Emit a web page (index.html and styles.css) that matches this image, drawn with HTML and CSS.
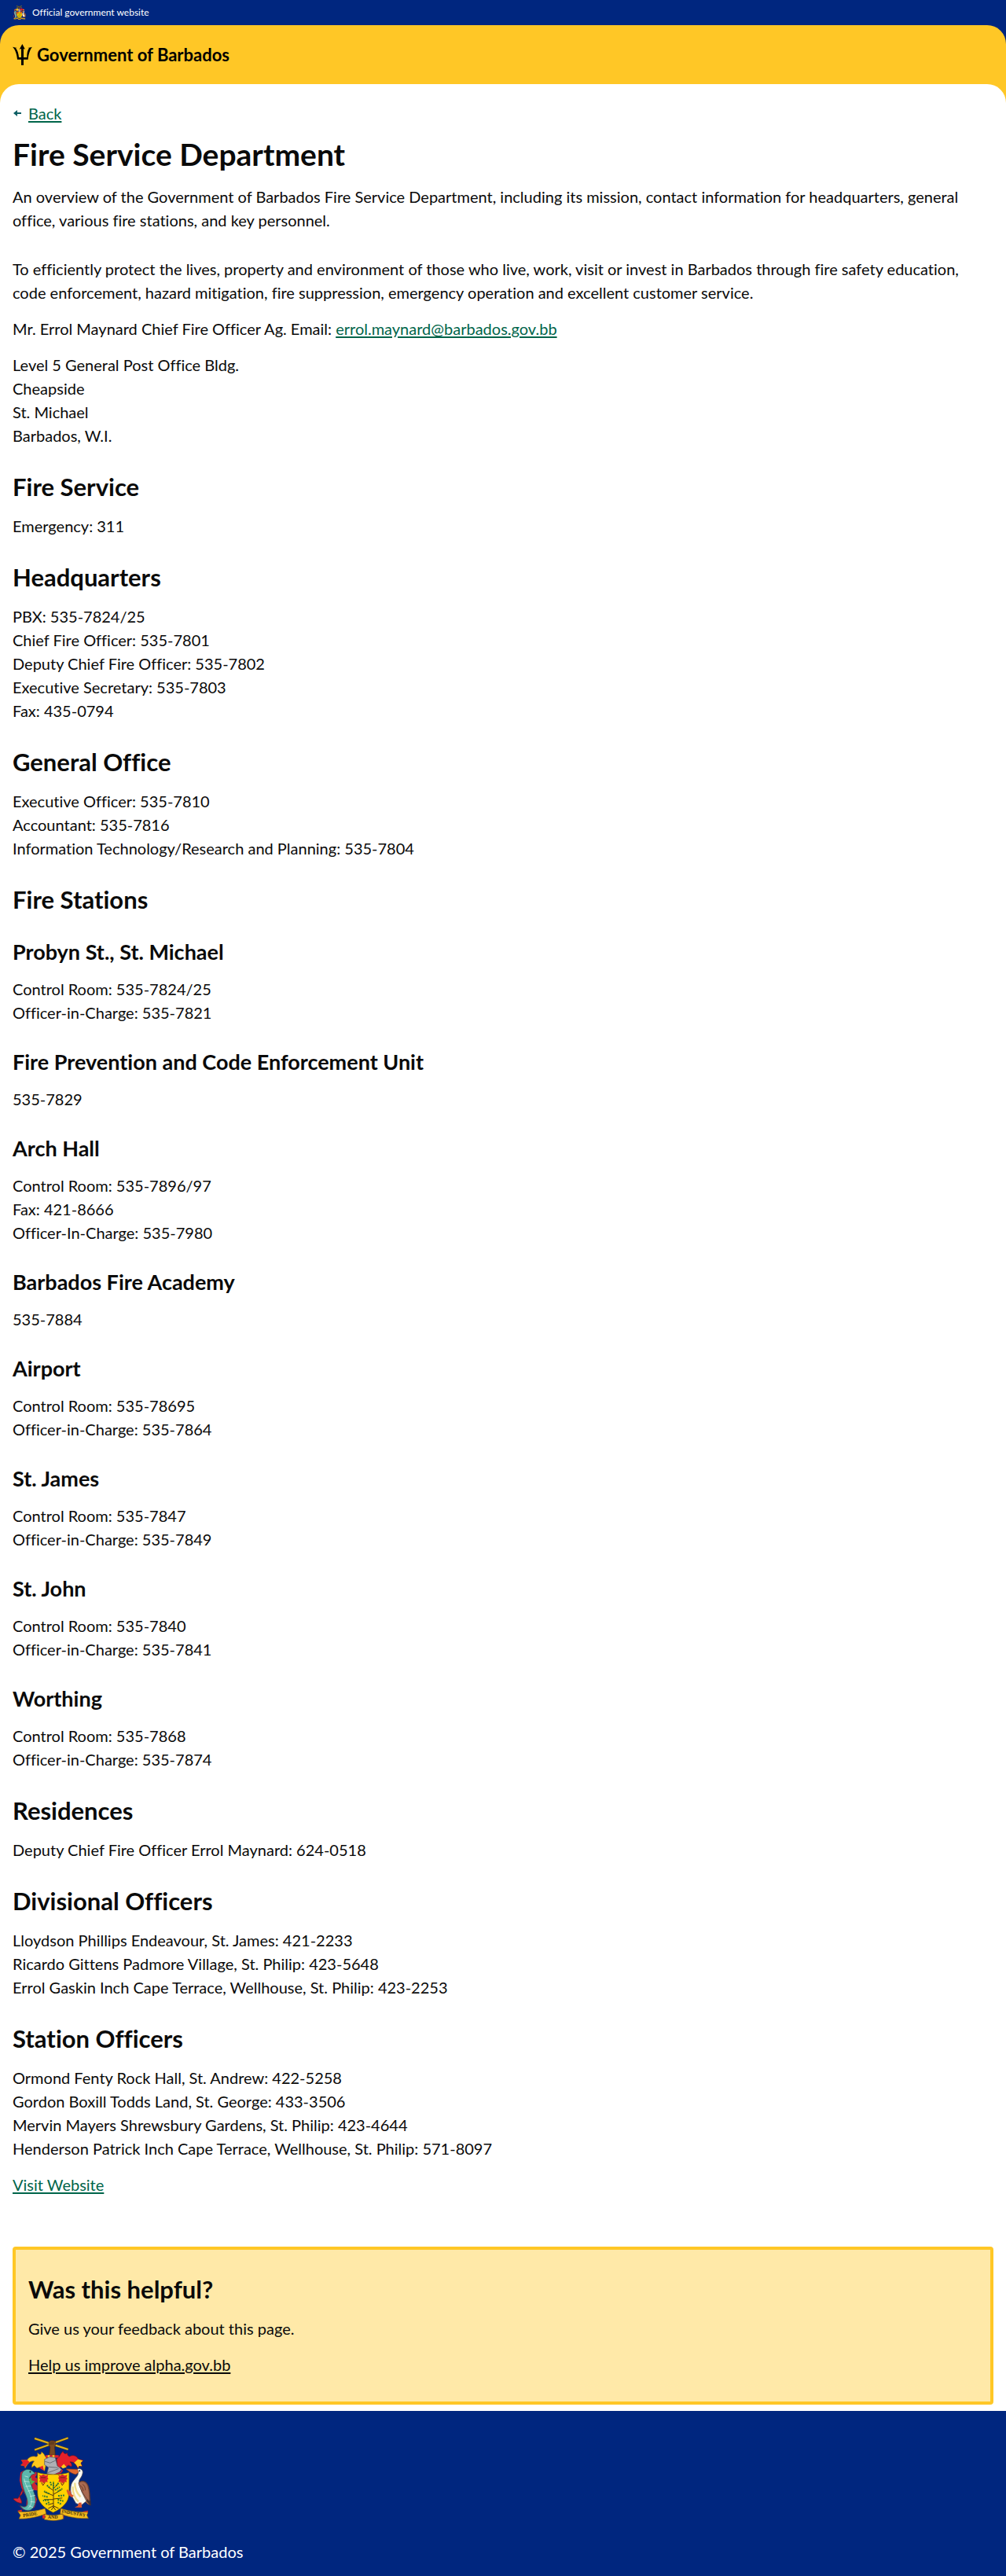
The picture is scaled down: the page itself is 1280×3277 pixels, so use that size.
FILE: index.html
```html
<!DOCTYPE html>
<html lang="en">
<head>
<meta charset="utf-8">
<meta name="viewport" content="width=device-width, initial-scale=1">
<title>Fire Service Department - Government of Barbados</title>
<link rel="stylesheet" href="styles.css">
</head>
<body>
<div class="official">
  <svg class="official-crest" viewBox="50 117 300 325" aria-hidden="true"><use href="#crest"/></svg>
  <span>Official government website</span>
</div>

<div class="band band-blue">
  <header class="masthead">
    <a class="brand" href="#">
      <svg class="trident" viewBox="48 168 75 81" aria-hidden="true">
        <path d="M85 168l11 20-6-2v33h13c-1-14 2-27 8-35l-6-1c6-1 12-3 18-4-8 9-14 26-16 48H90v22h-9v-22H66c-2-22-8-39-18-48 6 1 13 3 18 4l-6 1c7 8 11 21 12 35h9v-33l-7 2z"/>
      </svg>
      <span>Government of Barbados</span>
    </a>
  </header>
</div>

<div class="band band-yellow">
  <main class="content">
    <div class="back">
      <svg class="back-arrow" viewBox="0 0 12 8" aria-hidden="true"><path d="M1 4l5-4v3h5v2H6v3z"/></svg>
      <a href="#">Back</a>
    </div>
    <h1>Fire Service Department</h1>
    <p class="lead">An overview of the Government of Barbados Fire Service Department, including its mission, contact information for headquarters, general office, various fire stations, and key personnel.</p>
    <p>To efficiently protect the lives, property and environment of those who live, work, visit or invest in Barbados through fire safety education, code enforcement, hazard mitigation, fire suppression, emergency operation and excellent customer service.</p>
    <p>Mr. Errol Maynard Chief Fire Officer Ag. Email: <a href="mailto:errol.maynard@barbados.gov.bb">errol.maynard@barbados.gov.bb</a></p>
    <p>Level 5 General Post Office Bldg.<br>Cheapside<br>St. Michael<br>Barbados, W.I.</p>

    <h2>Fire Service</h2>
    <p>Emergency: 311</p>

    <h2>Headquarters</h2>
    <p>PBX: 535-7824/25<br>Chief Fire Officer: 535-7801<br>Deputy Chief Fire Officer: 535-7802<br>Executive Secretary: 535-7803<br>Fax: 435-0794</p>

    <h2>General Office</h2>
    <p>Executive Officer: 535-7810<br>Accountant: 535-7816<br>Information Technology/Research and Planning: 535-7804</p>

    <h2>Fire Stations</h2>
    <h3>Probyn St., St. Michael</h3>
    <p>Control Room: 535-7824/25<br>Officer-in-Charge: 535-7821</p>
    <h3>Fire Prevention and Code Enforcement Unit</h3>
    <p>535-7829</p>
    <h3>Arch Hall</h3>
    <p>Control Room: 535-7896/97<br>Fax: 421-8666<br>Officer-In-Charge: 535-7980</p>
    <h3>Barbados Fire Academy</h3>
    <p>535-7884</p>
    <h3>Airport</h3>
    <p>Control Room: 535-78695<br>Officer-in-Charge: 535-7864</p>
    <h3>St. James</h3>
    <p>Control Room: 535-7847<br>Officer-in-Charge: 535-7849</p>
    <h3>St. John</h3>
    <p>Control Room: 535-7840<br>Officer-in-Charge: 535-7841</p>
    <h3>Worthing</h3>
    <p>Control Room: 535-7868<br>Officer-in-Charge: 535-7874</p>

    <h2>Residences</h2>
    <p>Deputy Chief Fire Officer Errol Maynard: 624-0518</p>

    <h2>Divisional Officers</h2>
    <p>Lloydson Phillips Endeavour, St. James: 421-2233<br>Ricardo Gittens Padmore Village, St. Philip: 423-5648<br>Errol Gaskin Inch Cape Terrace, Wellhouse, St. Philip: 423-2253</p>

    <h2>Station Officers</h2>
    <p>Ormond Fenty Rock Hall, St. Andrew: 422-5258<br>Gordon Boxill Todds Land, St. George: 433-3506<br>Mervin Mayers Shrewsbury Gardens, St. Philip: 423-4644<br>Henderson Patrick Inch Cape Terrace, Wellhouse, St. Philip: 571-8097</p>

    <p><a href="#">Visit Website</a></p>

    <section class="feedback">
      <h2>Was this helpful?</h2>
      <p>Give us your feedback about this page.</p>
      <p><a href="#">Help us improve alpha.gov.bb</a></p>
    </section>
  </main>
</div>

<footer class="footer">
  <svg class="footer-crest" viewBox="50 117 300 325" role="img" aria-label="Coat of arms of Barbados">
    <g id="crest">
      <!-- crossed sugar canes held in a fist -->
      <path d="M134 126l128 42M134 170l128-46" stroke="#5a4a10" stroke-width="9"/>
      <path d="M134 126l128 42M134 170l128-46" stroke="#e2b21c" stroke-width="6"/>
      <path d="M189 138l8-4 14 1 4 10-4 15 2 30h-23l3-30-5-10z" fill="#7a4a22" stroke="#3c2412" stroke-width="2"/>
      <path d="M194 140v10M200 138v12M206 139v10" stroke="#3c2412" stroke-width="2"/>
      <!-- mantling -->
      <path d="M183 202c-10-4-9-16-23-25 0 11-7 13-15 4 0 9 3 14-6 15-13-4-28 1-33 12l-22 1 6 11-9 8 13 3 4 9c8-16 20-30 34-27-8 10-10 17-9 24l10-7 10 10 13-5 16 16z" fill="#ffc81c" stroke="#7d5b12" stroke-width="2"/>
      <path d="M106 208l-24 1 7 11-8 9 13 2 3 8c5-10 9-16 18-22zM151 238l14-8 5 20z" fill="#e3202b"/>
      <path d="M218 204c12-4 12-18 25-29 2 10 8 12 16 7 0 8 3 12 9 13 13-8 28-2 33 10l19 5-10 9 6 13-12-1-4 10c-7-16-17-27-31-25 8 6 8 12 6 18l-12-6-10 9-13-5-18 14z" fill="#e3202b" stroke="#7d1218" stroke-width="2"/>
      <path d="M300 206l18 5-8 9 5 12-11-1-4 8c-4-10-8-15-15-20zM246 224l10 12-14 5-7-7z" fill="#ffc81c"/>
      <path d="M176 190h50v10h-50z" fill="#e3202b"/><path d="M184 190h8v10h-8zM202 190h8v10h-8z" fill="#ffc81c"/>
      <!-- helmet -->
      <path d="M172 206l20-9 21 2 8 32 16 13-6 10-25 12-25-5 6-24-15-10z" fill="#aeb0b4" stroke="#4e5156" stroke-width="2"/>
      <path d="M173 214l20 6 22-10M187 235l36 3M182 258l44-16" fill="none" stroke="#6c7076" stroke-width="3"/>
      <path d="M208 264l27-10 2-12 5 8-8 10z" fill="#e3202b"/>
      <!-- dolphin -->
      <path d="M116 262l25-8 1 12-6 8 12 8v14l-14 0 18 20v10l-26-3zM94 248l-14 8-4 30 8 30 20 36-2 34-22 2-12-10 22 20 20 5 24-14 9-30z" fill="#c92333"/>
      <path d="M85 262c6-20 30-22 42-10l9 8-14 6-8 12c0 20 22 52 23 82 0 26-12 42-28 42-14 0-24-8-30-20 12 10 26 8 28-6 4-26-28-60-22-114z" fill="#5cb8ad" stroke="#234e55" stroke-width="2"/>
      <path d="M94 280c4 30 28 56 28 82 0 18-6 26-14 32M96 270l14 4M94 290l20 2M99 310l22-2M108 328l22-5M116 348l20-4M118 368l18 2M112 384l16 6" fill="none" stroke="#d8f0ec" stroke-width="2"/>
      <path d="M112 282l10-8 1 12 12 4-14 14z" fill="#55b04c"/>
      <path d="M84 366l-8-18c12-8 14-18 12-26-10 14-8 22-18 34-6 0-14-2-18 2 8 8 18 16 32 16z" fill="#d92a38" stroke="#7d1218" stroke-width="2"/>
      <circle cx="117" cy="254" r="3" fill="#222"/>
      <!-- shield -->
      <path d="M145 256c18 6 38 8 60 8s44-2 61-8v78c0 36-24 58-61 76-37-18-60-40-60-76z" fill="#ffd200" stroke="#6b520c" stroke-width="2"/>
      <path id="bloom" d="M150 265l9 3 8-4 9 4 10-3-3 10 4 6-5 4 2 8-9-1-6 6-7-6-10 1 3-10-4-6 4-4z" fill="#d8262c"/>
      <use href="#bloom" x="73"/>
      <path d="M160 294l6 12 8-12M234 294l6 12 8-12M158 276h18M232 276h18" fill="none" stroke="#6e2a16" stroke-width="3"/>
      <!-- bearded fig tree -->
      <path d="M206 392v-98M206 325l-22-14M206 318l18-18M206 345l-34-14M206 340l32-18M206 360l-36 0M206 358l34-4M206 374l-20 6M206 384l-20 10M206 384l20 10M206 388l-8 12M206 388l8 12" fill="none" stroke="#4a3212" stroke-width="3"/>
      <path d="M206 318v-28M192 315l-12-11M216 308l10-12M190 338l-20-10M222 330l18-12M184 350l-20-4M224 346l24-2M188 362l-22 2M222 360l22 6M190 370l-14 8M222 370l14 8M198 306l-4-14M212 324l18-12" fill="none" stroke="#2f7a34" stroke-width="6" stroke-dasharray="6 3"/>
      <!-- pelican -->
      <path d="M298 300c14-18 34-14 42 8 6 20 6 42 8 74l-10-4-22-20z" fill="#a9694f" stroke="#4c2c22" stroke-width="2"/>
      <path d="M336 354l12 12v18l-16-18z" fill="#43302c"/>
      <path d="M296 244c12-6 24 2 22 14-3 18-14 22-14 34 0 16 8 26 10 38l18 36-20 16-20-8-16-28c-8-26-4-48 8-60 10-12 18-20 16-28l-5-8z" fill="#fbfaf2" stroke="#5a5048" stroke-width="2"/>
      <path d="M280 310c0 24 8 46 22 58M288 296c0 20 8 40 22 54" fill="none" stroke="#efdc8e" stroke-width="7"/>
      <path d="M302 296c14-10 28-6 36 12 6 20 6 40 6 60-14-14-34-40-42-72z" fill="#a9694f" stroke="#4c2c22" stroke-width="2"/>
      <path d="M254 243l44 1 4 12-10 8c-12-2-24-8-38-21z" fill="#e2672e" stroke="#87391a" stroke-width="2"/>
      <circle cx="306" cy="250" r="3" fill="#222"/>
      <path d="M303 372l-4 12-12 6 28 1-2-20zM276 352l-14-10-6-16 4-6 6 10 4-8 4 16 10 8z" fill="#d9542c"/>
      <path d="M308 306c8 4 12 14 12 22M318 302c8 4 10 14 10 22" fill="none" stroke="#6c3e2e" stroke-width="3"/>
      <!-- motto scroll -->
      <path d="M69 402l16-4v10h-14zM318 406l20-4v12h-18zM164 416h16v16h-16zM232 416h14v16h-14z" fill="#d9262c"/>
      <path d="M70 406c34 4 72-2 104-12l4 20c-30 12-64 20-104 20l6-14zM170 416c22 6 46 6 72-2l2 20c-20 8-50 8-74 2l6-10zM234 394c32 10 68 16 104 14l-4 12 6 12c-36 2-76-4-108-18z" fill="#f7bd1e" stroke="#7d5b12" stroke-width="2"/>
      <g class="motto">
        <text x="90" y="427" transform="rotate(-9 90 427)">PRIDE</text>
        <text x="184" y="433">AND</text>
        <text x="237" y="410" transform="rotate(10 237 410)">INDUSTRY</text>
      </g>
    </g>
  </svg>
  <p>© 2025 Government of Barbados</p>
</footer>
</body>
</html>
```
FILE: styles.css
```css
:root {
  --blue: #00267f;
  --yellow: #ffc726;
  --pale: #ffe9a8;
  --green: #00654a;
  --ink: #0a0a0a;
}

* {
  box-sizing: border-box;
}

body {
  margin: 0;
  background: #fff;
  color: var(--ink);
  font-family: Lato, "Liberation Sans", sans-serif;
  font-variant-ligatures: none;
  font-size: 20px;
  line-height: 30px;
}

h1,
h2,
h3,
p {
  margin: 0;
}

a {
  color: var(--green);
  text-decoration-thickness: 2px;
  text-underline-offset: 2px;
}

/* Official strip */
.official {
  display: flex;
  align-items: center;
  gap: 8px;
  height: 32px;
  padding: 0 16px;
  background: var(--blue);
  color: #fff;
  font-size: 12px;
  line-height: 18px;
}

.official-crest {
  width: 17px;
  height: 18px;
}

/* Bands show behind the rounded corners of the panel they hold */
.band-blue {
  background: var(--blue);
}

.band-yellow {
  background: linear-gradient(var(--yellow) 24px, #fff 24px);
}

.masthead {
  padding: 24px 16px;
  border-radius: 24px 24px 0 0;
  background: var(--yellow);
}

.brand {
  display: flex;
  align-items: center;
  gap: 6px;
  color: #000;
  font-size: 22px;
  font-weight: 700;
  line-height: 27px;
  text-decoration: none;
}

.trident {
  width: 25px;
  height: 27px;
}

/* Page content */
.content {
  padding: 22px 16px 8px;
  border-radius: 24px 24px 0 0;
  background: #fff;
}

.back {
  display: flex;
  align-items: center;
  gap: 8px;
}

.back-arrow {
  width: 12px;
  height: 8px;
  fill: #0e5f64;
}

h1 {
  margin: 14px 0 16px;
  font-size: 39px;
  line-height: 46px;
}

h2 {
  margin: 32px 0 16px;
  font-size: 31px;
  line-height: 37px;
}

h3 {
  margin: 32px 0 16px;
  font-size: 27px;
  line-height: 32px;
}

p + p {
  margin-top: 16px;
}

.lead + p {
  margin-top: 32px;
}

.feedback {
  margin-top: 64px;
  padding: 32px 16px;
  border: 4px solid var(--yellow);
  border-radius: 4px;
  background: var(--pale);
}

.feedback h2 {
  margin-top: 0;
}

.feedback a {
  color: inherit;
}

/* Footer */
.footer {
  display: flex;
  flex-direction: column;
  gap: 24px;
  padding: 32px 16px 16px;
  background: var(--blue);
  color: #fff;
}

.footer-crest {
  width: 100px;
  height: 108px;
}

.motto {
  fill: #3c2c08;
  font-family: "Liberation Serif", serif;
  font-size: 18px;
  font-weight: 700;
}
```
